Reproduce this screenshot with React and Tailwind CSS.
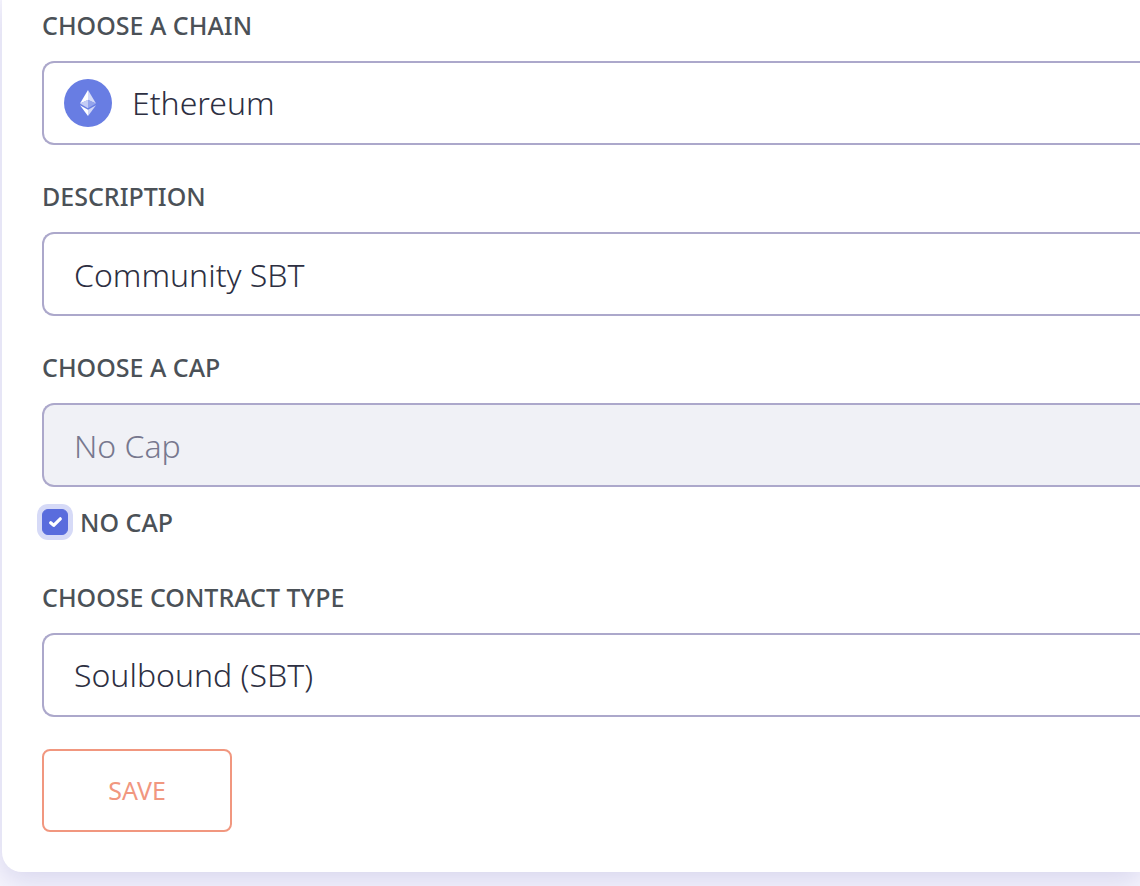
import React, { useState } from 'react';

const labelClass = 'block h-8 text-[25px] leading-8 font-medium uppercase text-[#4b5157]';
const fieldClass = 'block h-[84px] w-full rounded-l-xl border-2 border-r-0 border-[#aca8cb] px-[30px] text-[32px] font-light text-[#2d2f42] outline-none';

function EthereumIcon() {
    return (
        <svg className="size-12 shrink-0" viewBox="0 0 48 48" aria-hidden="true">
            <circle cx="24" cy="24" r="24" fill="#687de3" />
            <path d="M24 11 16 24.4l8-3.4Z" fill="#fff" />
            <path d="M24 11 32 24.4l-8-3.4Z" fill="#d5dbf8" />
            <path d="M16 24.4l8-3.6v8.4Z" fill="#c4ccf5" />
            <path d="M32 24.4l-8-3.6v8.4Z" fill="#94a4ec" />
            <path d="M16 26.2l8 4.6V37Z" fill="#fff" />
            <path d="M32 26.2l-8 4.6V37Z" fill="#d0d6f7" />
        </svg>
    );
}

export default function App() {
    const [chain, setChain] = useState('ethereum');
    const [description, setDescription] = useState('Community SBT');
    const [noCap, setNoCap] = useState(true);
    const [cap, setCap] = useState('');
    const [contractType, setContractType] = useState('sbt');

    return (
        <main className="min-h-screen overflow-hidden bg-[#f6f5fd] pl-0.5 font-['Noto_Sans',sans-serif]">
            <form onSubmit={(e) => e.preventDefault()} className="rounded-bl-[20px] bg-white pt-[9px] pb-10 pl-10 shadow-[0_8px_28px_rgba(90,85,175,0.2)]">
                <div className="mb-[35px]">
                    <label htmlFor="chain" className={labelClass}>Choose a chain</label>
                    <div className="mt-5 flex h-[84px] items-center rounded-l-xl border-2 border-r-0 border-[#aca8cb] pl-5">
                        <EthereumIcon />
                        <select id="chain" value={chain} onChange={(e) => setChain(e.target.value)} className="h-full flex-1 appearance-none pl-5 text-[32px] font-light text-[#2d2f42] outline-none">
                            <option value="ethereum">Ethereum</option>
                        </select>
                    </div>
                </div>

                <div className="mb-[35px]">
                    <label htmlFor="description" className={labelClass}>Description</label>
                    <input id="description" type="text" value={description} onChange={(e) => setDescription(e.target.value)} className={`${fieldClass} mt-5`} />
                </div>

                <div className="mb-[46px]">
                    <label htmlFor="cap" className={labelClass}>Choose a cap</label>
                    <input
                        id="cap"
                        type="text"
                        placeholder="No Cap"
                        value={cap}
                        onChange={(e) => setCap(e.target.value)}
                        disabled={noCap}
                        className={`${fieldClass} mt-5 placeholder:text-[#77788e] disabled:bg-[#f0f1f6]`}
                    />
                    <div className="mt-[22px] flex h-[26px] items-center gap-3">
                        <span className="grid size-[26px] shrink-0">
                            <input
                                id="no-cap"
                                type="checkbox"
                                checked={noCap}
                                onChange={(e) => setNoCap(e.target.checked)}
                                className="peer col-start-1 row-start-1 size-[26px] appearance-none rounded-md border border-[#aca8cb] ring-[5px] ring-[#d6daf7] outline-none checked:border-[#596cdd] checked:bg-[#596cdd]"
                            />
                            <svg className="pointer-events-none invisible col-start-1 row-start-1 size-[26px] peer-checked:visible" viewBox="0 0 26 26" fill="none" aria-hidden="true">
                                <path d="M8.7 13.7 11.7 16.4 18.3 9.8" stroke="#fff" strokeWidth="3.2" strokeLinecap="round" strokeLinejoin="round" />
                            </svg>
                        </span>
                        <label htmlFor="no-cap" className={labelClass}>No cap</label>
                    </div>
                </div>

                <div className="mb-8">
                    <label htmlFor="contract-type" className={labelClass}>Choose contract type</label>
                    <select id="contract-type" value={contractType} onChange={(e) => setContractType(e.target.value)} className={`${fieldClass} mt-5 appearance-none`}>
                        <option value="sbt">Soulbound (SBT)</option>
                    </select>
                </div>

                <button type="submit" className="block h-[83px] w-[190px] rounded-lg border-2 border-[#f1977f] text-[25px] font-normal text-[#f1977f] uppercase">
                    Save
                </button>
            </form>
        </main>
    );
}
